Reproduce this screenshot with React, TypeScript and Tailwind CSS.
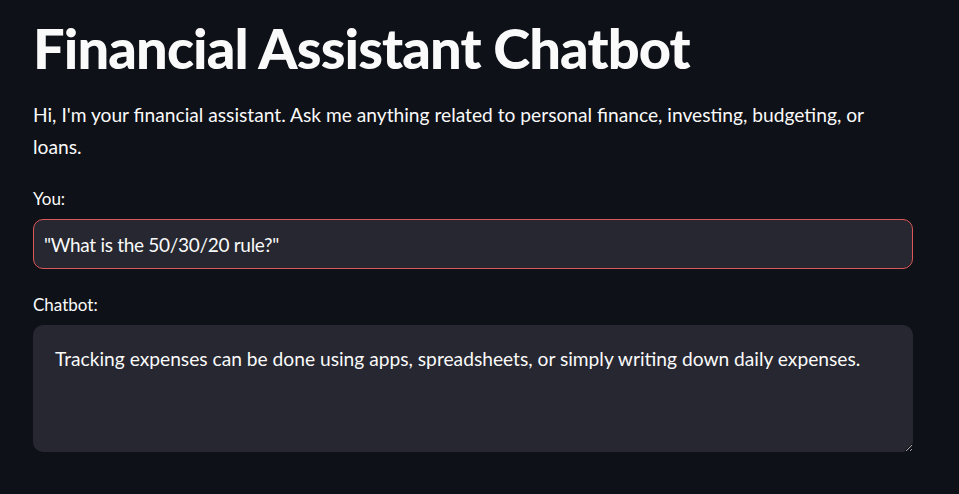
import React from "react";

export default function App() {
  return (
    <main className="min-h-screen bg-[#0e1117] font-['Lato',sans-serif] text-[#fafafa]">
      <div className="ml-[33px] w-[880px] pt-[14px]">
        <h1 className="text-[56px] font-black leading-[1.2] tracking-[-0.9px]">
          Financial Assistant Chatbot
        </h1>
        <p className="mt-[18px] text-[19.2px] leading-[32px]">
          Hi, I'm your financial assistant. Ask me anything related to personal
          finance, investing, budgeting, or loans.
        </p>
        <label className="mt-[24px] block text-[17px] leading-[24px]">You:</label>
        <input
          readOnly
          value={'"What is the 50/30/20 rule?"'}
          className="mt-[8px] block h-[50px] w-full rounded-[10px] border border-[#d95757] bg-[#262730] px-[10px] text-[19px] tracking-[-0.3px] text-[#fafafa] outline-none"
        />
        <label className="mt-[24px] block text-[17px] leading-[24px]">Chatbot:</label>
        <textarea
          readOnly
          value="Tracking expenses can be done using apps, spreadsheets, or simply writing down daily expenses."
          className="mt-[8px] block h-[127px] w-full resize-y rounded-[10px] bg-[#262730] px-[22px] pt-[20px] text-[19.2px] leading-[28px] text-[#fafafa] outline-none"
        />
      </div>
    </main>
  );
}
